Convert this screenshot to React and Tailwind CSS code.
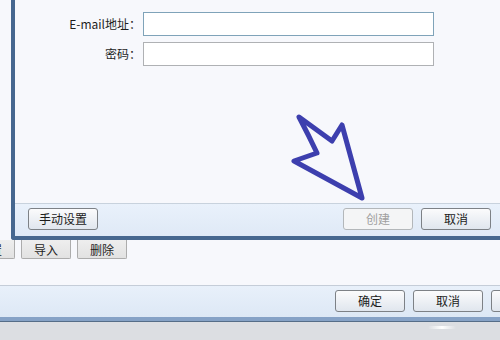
import React from 'react';

const font = { fontFamily: '"Noto Sans CJK SC", "Noto Sans", sans-serif' };

// dialog footer / window button
function Btn({ children, disabled, className = '' }) {
  return (
    <button
      className={`h-[22px] w-[70px] rounded-[3px] border text-[12px] leading-none ${
        disabled
          ? 'border-[#b3b7ba] bg-[#f4f5f6] text-[#a0a0a0]'
          : 'border-[#7d8186] bg-gradient-to-b from-[#fbfbfc] to-[#e0e6ee] text-[#1b1b1b]'
      } ${className}`}
    >
      {children}
    </button>
  );
}

function Arrow() {
  return (
    <svg
      className="absolute left-[270px] top-[108px]"
      width="90"
      height="100"
      viewBox="0 0 90 100"
      fill="none"
    >
      <path
        d="M14 9 L47 33 L57 17 L77 90 L9 53 L32 45 Q24 28 14 9 Z"
        stroke="#3d3fae"
        strokeWidth="5"
        strokeLinejoin="round"
        strokeLinecap="round"
      />
    </svg>
  );
}

export default function App() {
  return (
    <div className="w-[500px] h-[340px] overflow-hidden bg-[#f7f8fc] flex flex-col text-[#1e1e1e]" style={font}>
      {/* top: dialog over the main window */}
      <div className="flex h-[240px] shrink-0">
        <div className="w-[11px] bg-[#f7f8fc]" />
        <div className="flex-1 flex flex-col border-l-4 border-b-4 border-[#46678f] rounded-bl-[3px]">
          <div className="relative flex-1 bg-[#f7f8fc] pt-[12px] flex flex-col gap-[6px]">
            <div className="flex items-center h-[24px]">
              <label className="w-[126px] text-right text-[12px]">E-mail地址：</label>
              <input className="ml-[2px] w-[291px] h-[24px] bg-white border border-[#7fa3b9] outline-none" />
            </div>
            <div className="flex items-center h-[24px]">
              <label className="w-[126px] text-right text-[12px]">密码：</label>
              <input type="password" className="ml-[2px] w-[291px] h-[24px] bg-white border border-[#afb1b4] outline-none" />
            </div>
            <Arrow />
          </div>
          <div className="h-[33px] border-t border-[#c8d2dd] bg-gradient-to-b from-[#e9f1fb] to-[#dfe9f6] flex items-start pt-[4px] pl-[13px] pr-[9px]">
            <Btn>手动设置</Btn>
            <div className="flex-1" />
            <Btn disabled>创建</Btn>
            <Btn className="ml-[8px]">取消</Btn>
          </div>
        </div>
      </div>

      {/* main window body */}
      <div className="h-[45px] shrink-0 flex items-start gap-[6px] -ml-[35px]">
        {['设置', '导入', '删除'].map((t) => (
          <button
            key={t}
            className="h-[19px] w-[50px] border border-t-0 border-[#acacac] rounded-b-[2px] bg-gradient-to-b from-[#eeeeee] to-[#e2e2e2] text-[12px] leading-none pt-[1px]"
          >
            {t}
          </button>
        ))}
      </div>

      {/* main window footer */}
      <div className="h-[32px] shrink-0 border-t border-[#c5cdd8] bg-gradient-to-b from-[#e8f0fa] to-[#dde8f5] flex items-start justify-end gap-[8px] pt-[4px] -mr-[61px]">
        <Btn>确定</Btn>
        <Btn>取消</Btn>
        <Btn />
      </div>
      <div className="h-[5px] shrink-0 bg-[#86a2c6] border-b border-[#566d88]" />
      <div className="flex-1 bg-[#dcdee2] pt-[4px] pl-[428px]">
        <div className="w-[28px] h-[3px] rounded-full bg-gradient-to-r from-[#dcdee2] via-white to-[#dcdee2]" />
      </div>
    </div>
  );
}
